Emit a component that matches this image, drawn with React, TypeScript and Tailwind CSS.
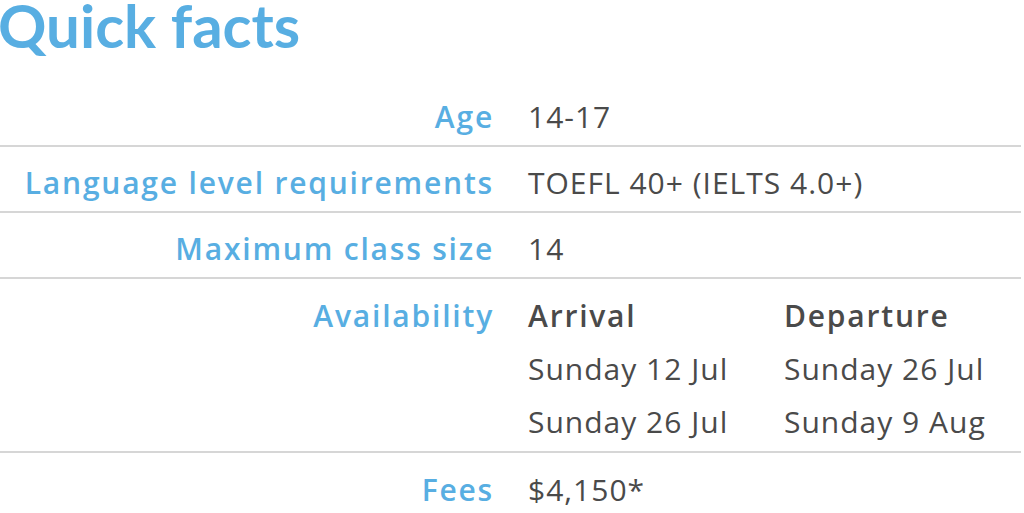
export default function App() {
  const font = { fontFamily: '"Open Sans", Lato, sans-serif' };
  const rows: { label: string; value: string }[] = [
    { label: "Age", value: "14-17" },
    { label: "Language level requirements", value: "TOEFL 40+ (IELTS 4.0+)" },
    { label: "Maximum class size", value: "14" },
  ];
  const label = "w-[494px] shrink-0 text-right text-[30px] leading-[36px] font-semibold text-[#58aee2] tracking-[1.8px] whitespace-nowrap";
  const value = "ml-[34px] text-[30px] leading-[36px] text-[#4a4a4a] tracking-[1px] whitespace-nowrap";
  return (
    <div className="w-[1021px] bg-white" style={font}>
      <h1 className="text-[60px] leading-[50px] font-bold text-[#58aee2] h-[81px] -ml-[2px]" style={{ fontFamily: 'Lato, sans-serif' }}>Quick facts</h1>
      {rows.map((r) => (
        <div key={r.label} className="flex border-b-2 border-[#d6d6d6] pt-[18px] pb-[10px]">
          <div className={label}>{r.label}</div>
          <div className={value}>{r.value}</div>
        </div>
      ))}
      <div className="flex border-b-2 border-[#d6d6d6] pt-[19px] pb-[11px]">
        <div className={label}>Availability</div>
        <div className={value + " flex"}>
          <div className="w-[256px] flex flex-col gap-[17px]">
            <div className="font-semibold tracking-[1.8px]">Arrival</div>
            <div>Sunday 12 Jul</div>
            <div>Sunday 26 Jul</div>
          </div>
          <div className="flex flex-col gap-[17px]">
            <div className="font-semibold tracking-[1.8px]">Departure</div>
            <div>Sunday 26 Jul</div>
            <div>Sunday 9 Aug</div>
          </div>
        </div>
      </div>
      <div className="flex pt-[19px] pb-[10px]">
        <div className={label}>Fees</div>
        <div className={value}>$4,150*</div>
      </div>
    </div>
  );
}
